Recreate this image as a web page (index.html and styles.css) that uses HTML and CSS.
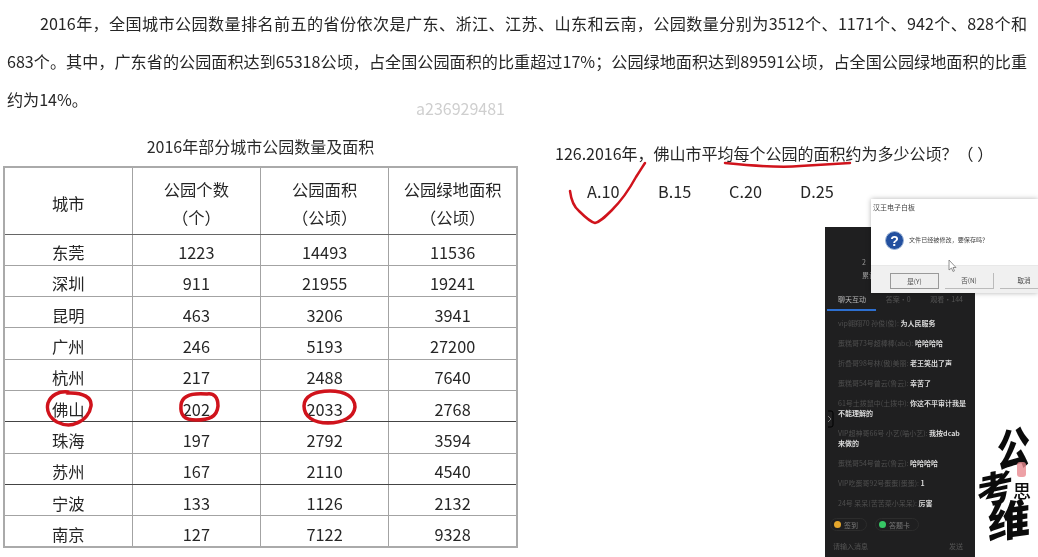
FILE: index.html
```html
<!DOCTYPE html>
<html lang="zh-CN">
<head>
<meta charset="utf-8">
<title>公园数量及面积</title>
<link rel="stylesheet" href="styles.css">
</head>
<body>
<main class="page">
  <p class="passage"><span class="line first">2016年，全国城市公园数量排名前五的省份依次是广东、浙江、江苏、山东和云南，公园数量分别为3512个、1171个、942个、828个和</span><span class="line">683个。其中，广东省的公园面积达到65318公顷，占全国公园面积的比重超过17%；公园绿地面积达到89591公顷，占全国公园绿地面积的比重</span><span class="line last">约为14%。</span></p>
  <div class="columns">
    <section class="left">
      <h2 class="caption">2016年部分城市公园数量及面积</h2>
      <table class="data">
        <thead>
          <tr><th>城市</th><th>公园个数<br>（个）</th><th>公园面积<br>（公顷）</th><th>公园绿地面积<br>（公顷）</th></tr>
        </thead>
        <tbody>
          <tr><td>东莞</td><td>1223</td><td>14493</td><td>11536</td></tr>
          <tr><td>深圳</td><td>911</td><td>21955</td><td>19241</td></tr>
          <tr><td>昆明</td><td>463</td><td>3206</td><td>3941</td></tr>
          <tr><td>广州</td><td>246</td><td>5193</td><td>27200</td></tr>
          <tr><td>杭州</td><td>217</td><td>2488</td><td>7640</td></tr>
          <tr class="dark"><td>佛山</td><td>202</td><td>2033</td><td>2768</td></tr>
          <tr><td>珠海</td><td>197</td><td>2792</td><td>3594</td></tr>
          <tr class="dark"><td>苏州</td><td>167</td><td>2110</td><td>4540</td></tr>
          <tr><td>宁波</td><td>133</td><td>1126</td><td>2132</td></tr>
          <tr><td>南京</td><td>127</td><td>7122</td><td>9328</td></tr>
        </tbody>
      </table>
    </section>
    <section class="right">
      <p class="question">126.2016年，佛山市平均每个公园的面积约为多少公顷？（ ）</p>
      <div class="options"><span>A.10</span><span>B.15</span><span>C.20</span><span>D.25</span></div>
    </section>
  </div>
</main>

<div class="watermark">a236929481</div>

<aside class="chat">
  <div class="dots"></div>
  <div class="stats"><span>2</span><span>累计</span></div>
  <div class="tabs"><span class="tab on">聊天互动</span><span class="tab">答案·0</span><span class="tab">观看·144</span></div>
  <div class="indicator"></div>
  <ul class="messages">
    <li><span class="who">vip翱翔70 孙俊(俊):</span> 为人民服务</li>
    <li><span class="who">蛋糕哥73号超棒棒(abc):</span> 哈哈哈哈</li>
    <li><span class="who">折叠哥98号林(傲)美丽:</span> 老王笑出了声</li>
    <li><span class="who">蛋糕哥54号曾云(鲁云):</span> 幸苦了</li>
    <li><span class="who">61号土拨鼠中(土拨中):</span> 你这不平审计我是<br>不能理解的</li>
    <li><span class="who">VIP超神哥66号 小艺(喵小艺):</span> 我按dcab<br>来做的</li>
    <li><span class="who">蛋糕哥54号曾云(鲁云):</span> 哈哈哈哈</li>
    <li><span class="who">VIP吃蛋哥92号蛋蛋(蛋蛋):</span> 1</li>
    <li><span class="who">24号 呆呆(苦苦菜小呆呆):</span> 厉害</li>
  </ul>
  <div class="chips">
    <span class="chip"><i class="dot gold"></i>签到</span>
    <span class="chip"><i class="dot green"></i>答题卡</span>
  </div>
  <div class="inputrow"><span>请输入消息</span><span>发送</span></div>
  <svg class="handle" width="8" height="18" viewBox="0 0 8 18"><path d="M1 1h3q2 0 2 2v12q0 2-2 2H1" fill="none" stroke="#000" stroke-width="1"/><path d="M1 6l3 3-3 3" fill="none" stroke="#777" stroke-width="1"/></svg>
</aside>

<div class="dialog">
  <div class="dialog-title">汉王电子白板</div>
  <div class="dialog-body">
    <svg width="19" height="19" viewBox="0 0 19 19"><circle cx="9.5" cy="9.500" r="9" fill="#23509f" stroke="#9db4d6" stroke-width="1"/><text x="9.5" y="14.5" text-anchor="middle" class="qmark">?</text></svg>
    <span>文件已经被修改，要保存吗？</span>
  </div>
  <div class="dialog-foot">
    <span class="btn primary">是(Y)</span><span class="btn">否(N)</span><span class="btn">取消</span>
  </div>
  <svg class="cursor" width="9" height="14" viewBox="0 0 9 14"><path d="M1 1v10l2.500-2 1.500 3.500 1.500-.7L5 8.500h3z" fill="#fff" stroke="#777" stroke-width=".8"/></svg>
</div>

<div class="brand">
  <span class="g gong">公</span>
  <span class="g kao">考</span>
  <span class="g si">思</span>
  <span class="g wei">维</span>
  <span class="seal"></span>
</div>

<svg class="ink" width="1038" height="557" viewBox="0 0 1038 557">
  <path d="M725 163c30 3 55 5 75 3 18-1 35-2 50-3"/>
  <path d="M570 191c1 8 3 15 9 20 6 6 11 11 16 12 5-1 10-6 17-13 10-10 18-22 24-33 4-6 7-11 9-14"/>
  <path class="o" d="M68 392c-9-1-17 3-20 11-2 8 2 15 9 19 6 3 14 4 20 1 8-3 13-10 14-17 1-8-7-14-24-13"/>
  <path class="o" d="M207 394c-12-1-25 0-26 11-1 10 3 15 15 15 13 0 21-3 22-14 0-9-4-13-11-12"/>
  <path class="o" d="M330 391c-15 0-26 5-26 15 0 11 10 17 24 17 15 0 26-6 27-16 0-10-10-16-25-16"/>
</svg>
</body>
</html>
```
FILE: styles.css
```css
* { box-sizing: border-box; }
html, body { margin: 0; padding: 0; height: 557px; overflow: hidden; background: #fff; }
body {
  position: relative;
  font-family: "Noto Sans CJK SC", "Noto Sans", sans-serif;
  font-size: 16.3px;
  color: #262626;
}
.page { padding: 4px 11px 0 3px; filter: blur(.35px); }

.passage { margin: 0 0 0 4px; line-height: 38px; font-size: 16.1px; }
.line { display: block; text-align: justify; text-align-last: justify; white-space: nowrap; }
.line.first { padding-left: 33px; }
.line.last { text-align-last: left; }

.columns { display: flex; margin-top: 16px; }
.left { width: 515px; flex: none; }
.right { margin-left: 37px; padding-top: 7px; }

.caption { margin: 0 0 8px; font-size: 16px; font-weight: 400; text-align: center; line-height: 24px; color: #2b2b2b; }

.data { width: 515px; border-collapse: collapse; table-layout: fixed; border: 2px solid #aaa; }
.data th, .data td { border: 1px solid #a3a3a3; text-align: center; font-weight: 400; padding: 0; }
.data th { height: 67px; line-height: 28px; padding-top: 5px; }
.data thead th { border-bottom-color: #666; }
.data td { height: 31.3px; line-height: 20px; padding-top: 5px; }
.data tr.dark td { border-bottom-color: #444; }

.question { margin: 0; line-height: 24px; white-space: nowrap; font-size: 16px; }
.options { display: flex; gap: 32px; margin: 14px 0 0 32px; line-height: 24px; }
.options span { width: 39px; }

.watermark { position: absolute; left: 416px; top: 98px; font-size: 16px; color: #cfcfcf; filter: blur(.4px); line-height: 20px; }

.ink { position: absolute; left: 0; top: 0; pointer-events: none; filter: blur(.3px); }
.ink path { fill: none; stroke: #d0131c; stroke-width: 2.500px; stroke-linecap: round; stroke-linejoin: round; }
.ink path.o { stroke-width: 3.500px; }

.chat {
  position: absolute; left: 825px; top: 227px; width: 150px; height: 330px;
  background: #1f1f20; color: #ddd; font-size: 7px; line-height: 12px; overflow: hidden;
  display: flex; flex-direction: column; filter: blur(.45px);
}
.dots { position: absolute; left: 6px; top: 2px; width: 42px; height: 26px; background: radial-gradient(#3a3a3a 40%, transparent 45%) 0 0 / 2px 2px; }
.stats { position: absolute; left: 37px; top: 29px; display: flex; flex-direction: column; gap: 1px; color: #999; }
.tabs { display: flex; margin-top: 66px; padding: 0 12px 0 13px; justify-content: space-between; color: #555; }
.tab.on { color: #bbb; }
.indicator { width: 49px; height: 2px; margin: 4px 0 0 2px; background: #2d6fd0; }
.messages { list-style: none; margin: 2px 0 0; padding: 0 6px 0 13px; color: #d8d8d8; font-weight: 700; flex: 1; line-height: 10px; }
.messages li { padding: 5px 0; white-space: nowrap; }
.who { color: #4e4e4e; font-weight: 400; }
.chips { display: flex; gap: 8px; padding: 0 0 0 5px; margin-bottom: 9px; color: #777; }
.chip { display: flex; align-items: center; gap: 3px; height: 13px; padding: 0 8px 0 3px; border: 1px solid #2c2c2c; border-radius: 7px; }
.dot { display: block; width: 7px; height: 7px; border-radius: 50%; }
.dot.gold { background: #e6a72c; }
.dot.green { background: #37c765; }
.inputrow { display: flex; justify-content: space-between; padding: 0 12px 5px 8px; color: #555; }
.handle { position: absolute; left: 2px; top: 183px; }

.dialog {
  position: absolute; left: 871px; top: 199px; width: 167px; height: 94px; background: #fff;
  box-shadow: 0 0 5px rgba(0,0,0,.3); font-size: 6.500px; color: #444;
  display: flex; flex-direction: column; filter: blur(.4px);
}
.dialog-title { padding: 3px 2px; line-height: 10px; font-size: 7px; }
.dialog-body { display: flex; align-items: center; gap: 5px; padding: 0 0 0 14px; height: 50px; font-size: 6.100px; }
.dialog-body span { line-height: 10px; }
.qmark { fill: #fff; font-size: 14px; font-weight: 700; font-family: "Liberation Sans", sans-serif; }
.dialog-foot { display: flex; gap: 6px; flex: 1; background: #f0f0f0; padding: 7px 0 0 19px; border-top: 1px solid #e8e8e8; }
.btn { flex: none; width: 49px; height: 16px; line-height: 15px; text-align: center; border-right: 1px solid #bbb; border-bottom: 1px solid #bbb; }
.btn.primary { border: 1px solid #999; background: #eee; }
.cursor { position: absolute; left: 77px; top: 60px; }

.brand { position: absolute; left: 980px; top: 425px; width: 58px; height: 125px; color: #0b0b0b; filter: blur(.3px); }
.g { position: absolute; font-weight: 900; line-height: 1; }
.gong { left: 17px; top: 3px; font-size: 33px; transform: scaleY(1.35) skewY(-8deg); transform-origin: top left; }
.kao { left: -3px; top: 43px; font-size: 36px; transform: skewY(-12deg); }
.si { left: 33px; top: 56px; font-size: 18px; font-weight: 500; }
.wei { left: 8px; top: 72px; font-size: 42px; transform: skewY(-8deg); }
.seal { position: absolute; left: 37px; top: 37px; width: 9px; height: 15px; border-radius: 3px; background: #e88a90; opacity: .8; }
```
